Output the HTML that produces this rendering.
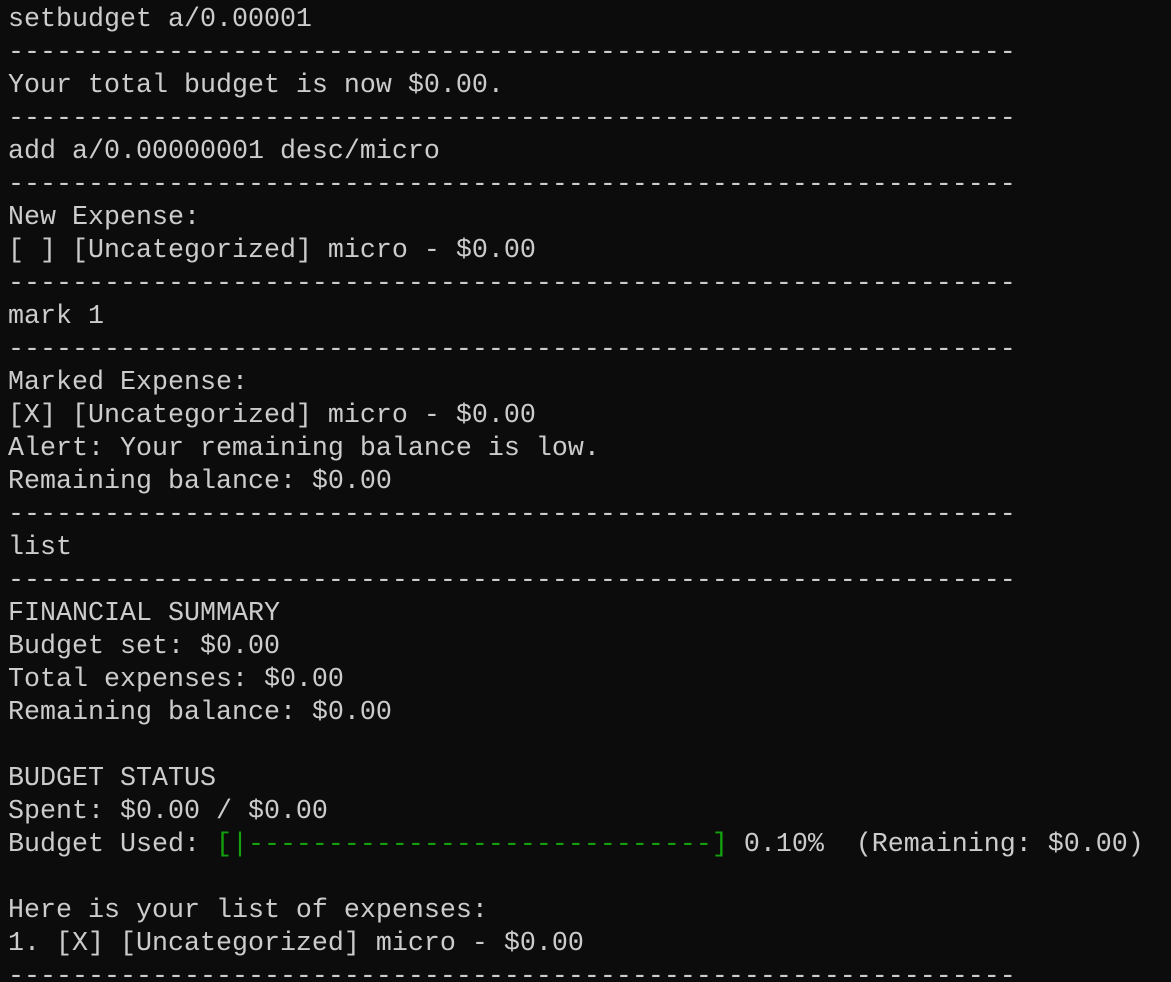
<!DOCTYPE html>
<html><head><meta charset="utf-8"><style>
html,body{margin:0;padding:0;background:#0c0c0c;width:1171px;height:982px;overflow:hidden}
pre{margin:0;padding:4px 0 0 8px;font-family:"Liberation Mono",monospace;font-size:26.67px;line-height:33px;color:#cccccc;white-space:pre}
.g{color:#13a10e}
</style></head><body><pre>setbudget a/0.00001
---------------------------------------------------------------
Your total budget is now $0.00.
---------------------------------------------------------------
add a/0.00000001 desc/micro
---------------------------------------------------------------
New Expense:
[ ] [Uncategorized] micro - $0.00
---------------------------------------------------------------
mark 1
---------------------------------------------------------------
Marked Expense:
[X] [Uncategorized] micro - $0.00
Alert: Your remaining balance is low.
Remaining balance: $0.00
---------------------------------------------------------------
list
---------------------------------------------------------------
FINANCIAL SUMMARY
Budget set: $0.00
Total expenses: $0.00
Remaining balance: $0.00

BUDGET STATUS
Spent: $0.00 / $0.00
Budget Used: <span class="g">[|-----------------------------]</span> 0.10%  (Remaining: $0.00)

Here is your list of expenses:
1. [X] [Uncategorized] micro - $0.00
---------------------------------------------------------------
</pre></body></html>
